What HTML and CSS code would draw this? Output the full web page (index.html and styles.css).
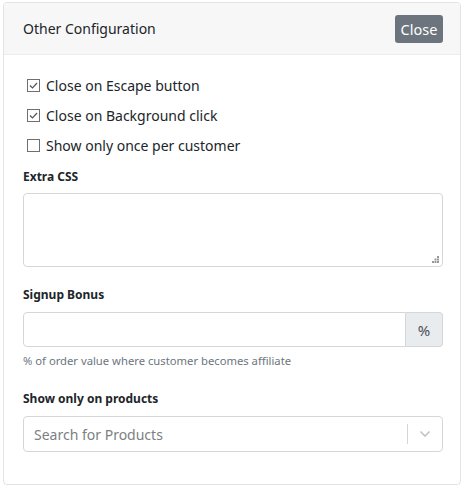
FILE: index.html
```html
<!DOCTYPE html>
<html>
<head>
<meta charset="utf-8">
<link rel="stylesheet" href="styles.css">
</head>
<body>
<div class="card">
  <div class="card-header">
    <span class="title">Other Configuration</span>
    <button class="btn-close">Close</button>
  </div>
  <div class="card-body">
    <div class="checks">
      <label class="check">
        <span class="box"><svg width="11" height="11" viewBox="0 0 11 11"><path d="M2 5.5 L4.5 8 L9 3" fill="none" stroke="#555" stroke-width="1.2"/></svg></span>
        <span>Close on Escape button</span>
      </label>
      <label class="check">
        <span class="box"><svg width="11" height="11" viewBox="0 0 11 11"><path d="M2 5.5 L4.5 8 L9 3" fill="none" stroke="#555" stroke-width="1.2"/></svg></span>
        <span>Close on Background click</span>
      </label>
      <label class="check">
        <span class="box"></span>
        <span>Show only once per customer</span>
      </label>
    </div>

    <div class="field field-css">
      <div class="label">Extra CSS</div>
      <div class="textarea">
        <svg class="grip" width="7" height="7" viewBox="0 0 7 7"><g fill="#999"><rect x="5" y="0" width="2" height="2"/><rect x="5" y="2.5" width="2" height="2"/><rect x="2.5" y="2.5" width="2" height="2"/><rect x="5" y="5" width="2" height="2"/><rect x="2.5" y="5" width="2" height="2"/><rect x="0" y="5" width="2" height="2"/></g></svg>
      </div>
    </div>

    <div class="field field-bonus">
      <div class="label">Signup Bonus</div>
      <div class="input-group">
        <div class="input"></div>
        <div class="addon">%</div>
      </div>
      <div class="help">% of order value where customer becomes affiliate</div>
    </div>

    <div class="field field-products">
      <div class="label">Show only on products</div>
      <div class="select">
        <span class="placeholder">Search for Products</span>
        <span class="sep"></span>
        <svg class="chev" width="12" height="8" viewBox="0 0 12 8"><path d="M1.5 1.5 L6 6 L10.5 1.5" fill="none" stroke="#c4c4c4" stroke-width="1.6"/></svg>
      </div>
    </div>
  </div>
</div>
</body>
</html>
```

FILE: styles.css
```css
* { box-sizing: border-box; }
html, body { margin: 0; padding: 0; background: #fff; }
body {
  font-family: "Noto Sans", "Open Sans", sans-serif;
  color: #212529;
  font-size: 14px;
}
.card {
  margin: 2px 3px 0 3px;
  height: 483px;
  border: 1px solid #e3e3e3;
  border-radius: 4px;
  overflow: hidden;
}
.card-header {
  height: 52px;
  background: #f7f7f7;
  border-bottom: 1px solid #ececec;
  display: flex;
  align-items: center;
  justify-content: space-between;
  padding: 0 17px 0 19px;
}
.title { font-size: 14px; color: #212529; }
.btn-close {
  font-family: inherit;
  font-size: 14.5px;
  color: #fff;
  background: #6c757d;
  border: none;
  border-radius: 3px;
  height: 28px;
  width: 48px;
  padding: 0;
  margin-top: 1px;
}
.card-body { padding: 18px 17px 0 19px; }
.checks { display: flex; flex-direction: column; gap: 8px; padding-top: 1px; }
.check { display: flex; align-items: center; height: 22px; }
.box {
  width: 13px; height: 13px;
  border: 1px solid #6f6f6f;
  margin: 0 6px 0 4px;
  display: flex; align-items: center; justify-content: center;
  background: #fff;
}
.box svg { display: block; }
.field-css { margin-top: 12px; }
.field-bonus { margin-top: 19px; }
.field-products { margin-top: 22px; }
.label { font-size: 12px; font-weight: 700; color: #212529; margin-bottom: 9px; }
.field-css .label { margin-bottom: 8px; }
.textarea {
  position: relative;
  height: 74px;
  border: 1px solid #d4d7da;
  border-radius: 4px;
}
.grip { position: absolute; right: 3px; bottom: 3px; }
.input-group { display: flex; height: 35px; }
.input {
  flex: 1;
  border: 1px solid #d4d7da;
  border-radius: 4px 0 0 4px;
}
.addon {
  width: 37px;
  background: #e9ecef;
  border: 1px solid #d4d7da;
  border-left: none;
  border-radius: 0 4px 4px 0;
  display: flex; align-items: center; justify-content: center;
  color: #495057;
  font-size: 15px;
}
.help { font-size: 11.25px; color: #6c757d; margin-top: 6px; }
.select {
  display: flex; align-items: center;
  height: 36px;
  border: 1px solid #d4d7da;
  border-radius: 4px;
  padding: 0 0 0 10px;
}
.placeholder { flex: 1; color: #7b7f83; }
.sep { width: 1px; height: 20px; background: #d4d7da; }
.chev { margin: 0 11px 0 11px; }
```
